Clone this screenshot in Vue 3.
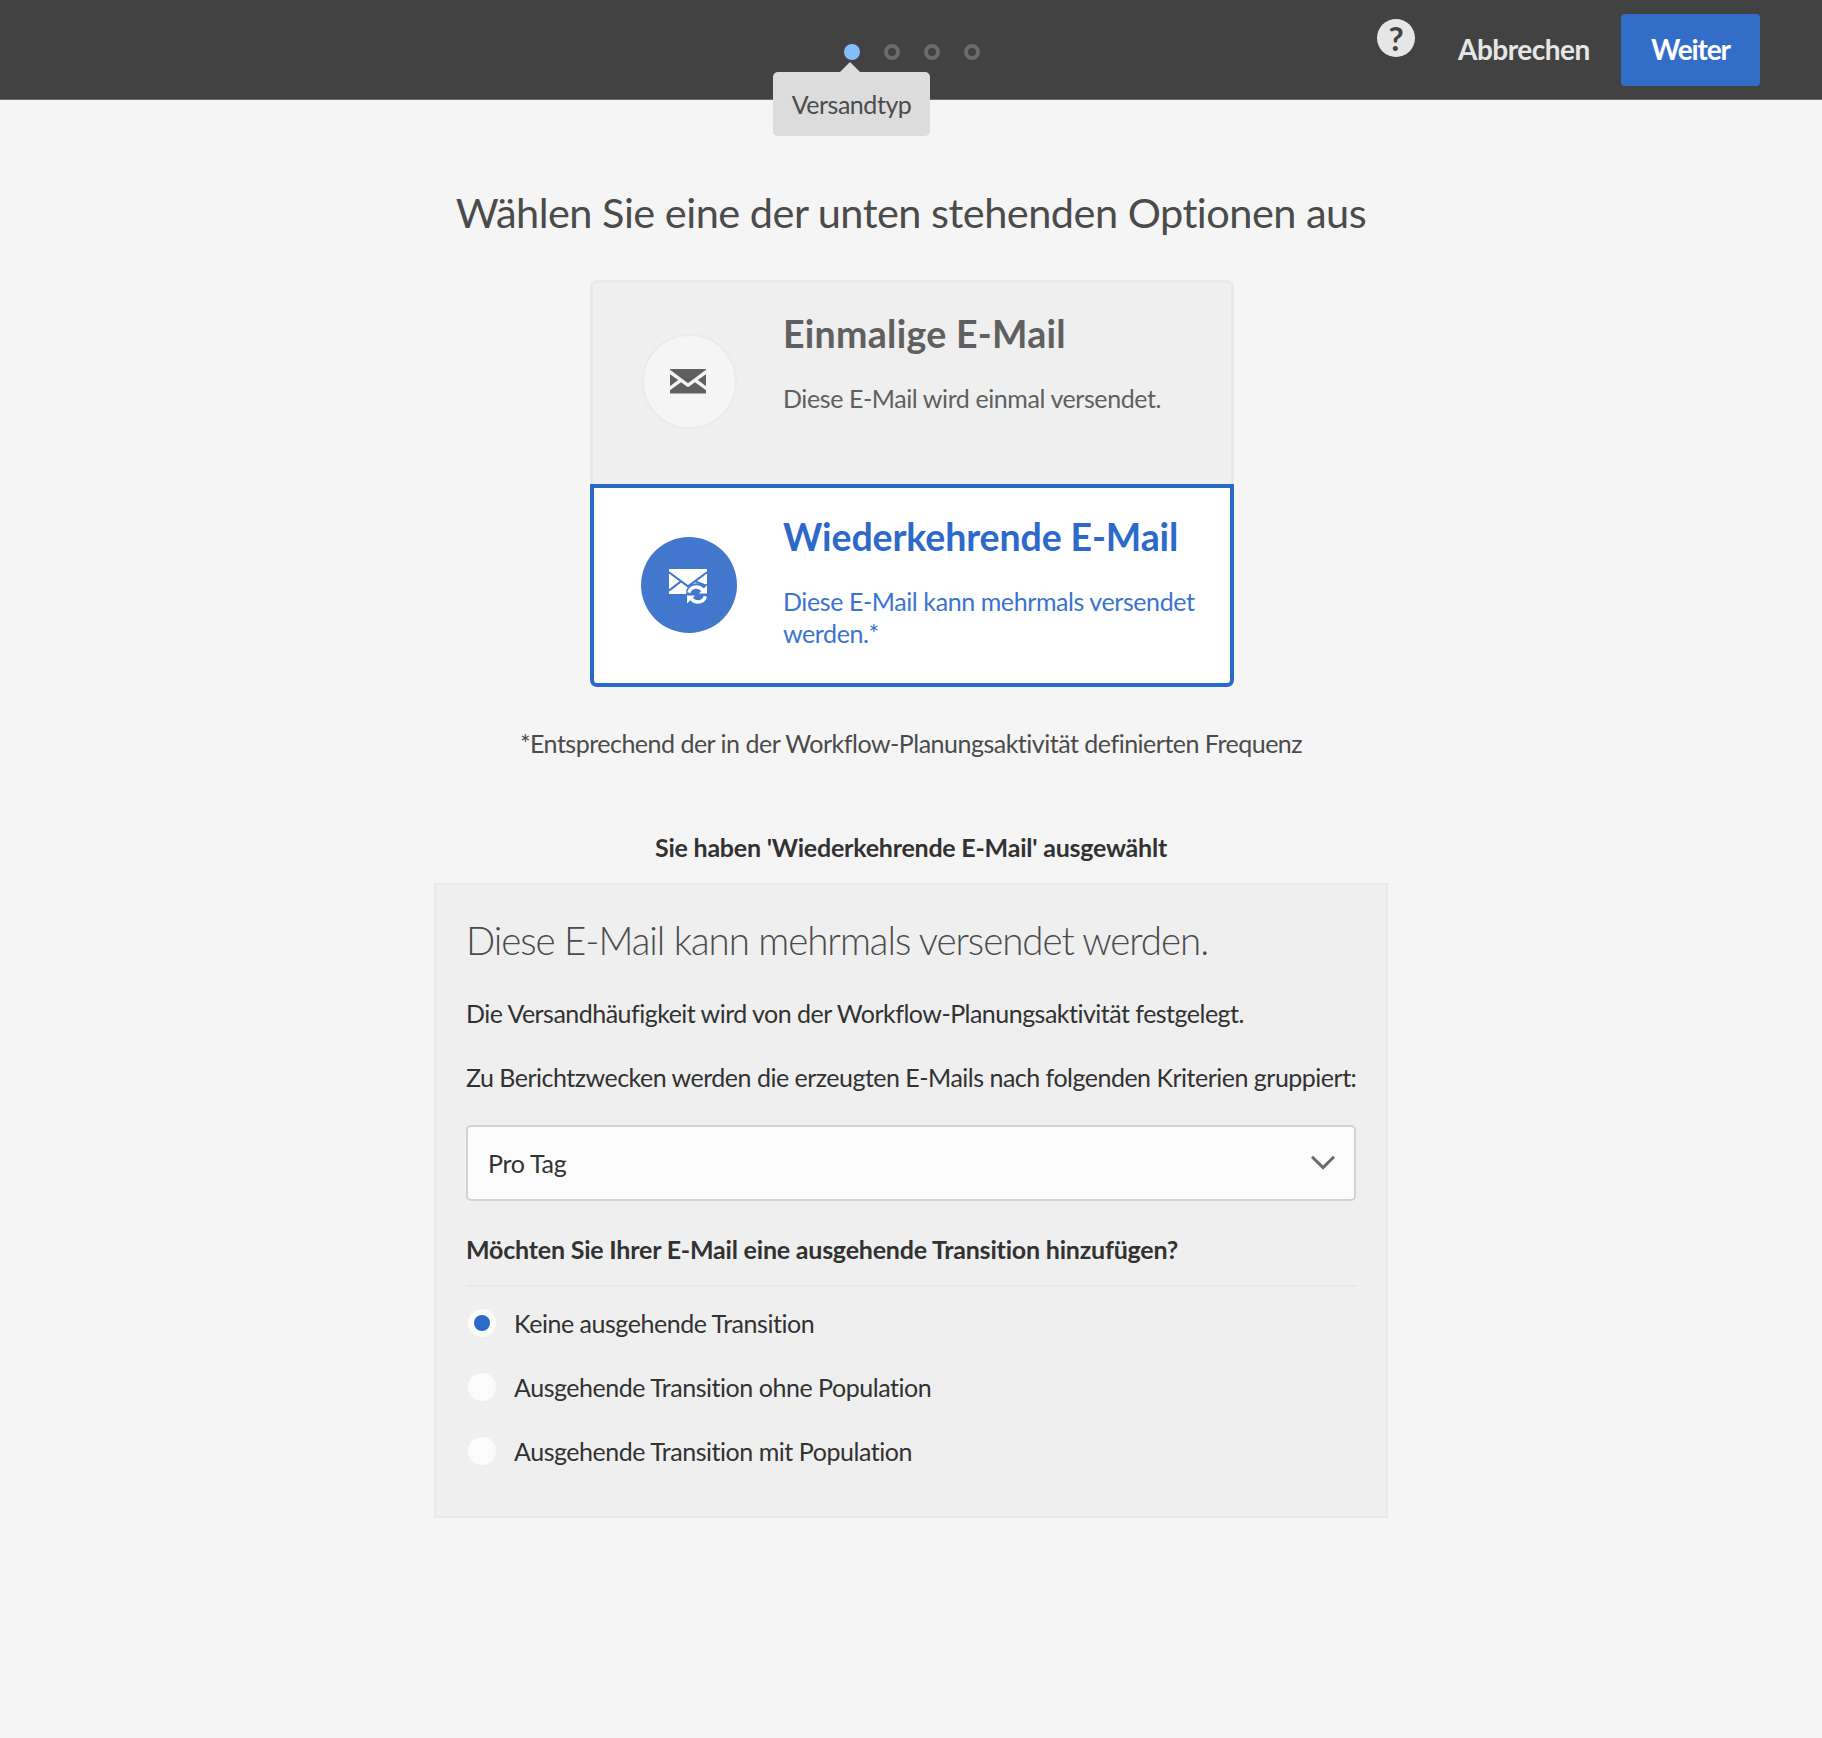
<script setup>
import { ref } from 'vue'

const steps = [{ label: 'Versandtyp' }, {}, {}, {}]
const currentStep = ref(0)

const transitions = [
  { id: 'none', label: 'Keine ausgehende Transition' },
  { id: 'empty', label: 'Ausgehende Transition ohne Population' },
  { id: 'population', label: 'Ausgehende Transition mit Population' },
]
const transition = ref('none')
</script>

<template>
  <div class="page">
    <header class="topbar">
      <ol class="steps">
        <li
          v-for="(step, i) in steps"
          :key="i"
          class="step"
          :class="{ active: i === currentStep }"
        >
          <span v-if="step.label" class="tooltip">{{ step.label }}</span>
        </li>
      </ol>
      <div class="actions">
        <button class="help" type="button" aria-label="Hilfe"><span>?</span></button>
        <button class="cancel" type="button">Abbrechen</button>
        <button class="next" type="button">Weiter</button>
      </div>
    </header>

    <main class="content">
      <h1 class="title">Wählen Sie eine der unten stehenden Optionen aus</h1>

      <div class="cards">
        <section class="card">
          <div class="badge">
            <svg width="36" height="25" viewBox="0 0 36 25" fill="currentColor">
              <path d="M0 0H36V.8L18 14.2 0 .8Z" />
              <path d="M0 5.2L8.2 11 0 17.2ZM36 5.2L27.8 11 36 17.2Z" />
              <path d="M0 24.6V21.2L11 13.2 18 18.2 25 13.2 36 21.2V24.6Z" />
            </svg>
          </div>
          <div class="card-text">
            <h2 class="card-title single">Einmalige E-Mail</h2>
            <p class="card-desc">Diese E-Mail wird einmal versendet.</p>
          </div>
        </section>

        <section class="card selected">
          <div class="badge">
            <svg width="38" height="35" viewBox="0 0 38 35">
              <path d="M0 0H38V25H0Z" fill="#fff" />
              <path
                d="M0 3.2L19 17.4 38 3.2M0 21.6L11.6 12.6M38 17L26.4 12.4"
                fill="none"
                stroke="#4178cd"
                stroke-width="2"
              />
              <path
                d="M17.2 35V21.5C18.6 17 22.8 14.2 27.4 14.2C31 14.2 33.6 15.2 35.2 16.8L38 14.6V35Z"
                fill="#4178cd"
              />
              <g fill="none" stroke="#fff" stroke-width="3.5">
                <path d="M19.8 23.6C20.8 20 23.8 17.9 27.4 17.9C30 17.9 32.4 19.2 34 21.2" />
                <path d="M36.4 27.2C35.4 30.8 32.4 32.9 28.8 32.9C26.2 32.9 23.8 31.6 22.2 29.6" />
              </g>
              <path d="M38 16.2V24.4H29.8ZM18 34.6V26.4H26.2Z" fill="#fff" />
            </svg>
          </div>
          <div class="card-text">
            <h2 class="card-title">Wiederkehrende E-Mail</h2>
            <p class="card-desc">Diese E-Mail kann mehrmals versendet werden.*</p>
          </div>
        </section>
      </div>

      <p class="footnote">
        *Entsprechend der in der Workflow-Planungsaktivität definierten Frequenz
      </p>
      <p class="chosen">Sie haben 'Wiederkehrende E-Mail' ausgewählt</p>

      <section class="panel">
        <h2 class="panel-title">Diese E-Mail kann mehrmals versendet werden.</h2>
        <p class="panel-text frequency">
          Die Versandhäufigkeit wird von der Workflow-Planungsaktivität festgelegt.
        </p>
        <p class="panel-text grouping">
          Zu Berichtzwecken werden die erzeugten E-Mails nach folgenden Kriterien gruppiert:
        </p>

        <div class="select" role="combobox">
          <span>Pro Tag</span>
          <svg width="26" height="16" viewBox="0 0 26 16">
            <path
              d="M2 1.8L13 12.6 24 1.8"
              fill="none"
              stroke="#6a6a6a"
              stroke-width="3"
            />
          </svg>
        </div>

        <h3 class="question">Möchten Sie Ihrer E-Mail eine ausgehende Transition hinzufügen?</h3>
        <div class="options">
          <label
            v-for="option in transitions"
            :key="option.id"
            class="option"
            @click="transition = option.id"
          >
            <span class="radio" :class="{ checked: transition === option.id }"></span>
            <span>{{ option.label }}</span>
          </label>
        </div>
      </section>
    </main>
  </div>
</template>

<style>
body {
  margin: 0;
  background: #f5f5f5;
}
</style>

<style scoped>
.page {
  min-height: 1738px;
  background: #f5f5f5;
  color: #323232;
  font-family: Lato, 'Open Sans', sans-serif;
  font-size: 25px;
  line-height: 32px;
  letter-spacing: -0.46px;
}

.page *,
.page {
  box-sizing: border-box;
}

h1,
h2,
h3,
p,
ol {
  margin: 0;
  padding: 0;
}

button {
  border: 0;
  padding: 0;
  font-family: inherit;
}

.topbar {
  display: grid;
  grid-template-columns: 1fr auto 1fr;
  height: 100px;
  border-bottom: 1px solid #6e6e6e;
  background: #424242;
}

.steps {
  grid-column: 2;
  display: flex;
  gap: 24px;
  height: 16px;
  margin: 44px 0 0 2px;
  list-style: none;
}

.step {
  position: relative;
  width: 16px;
  height: 16px;
  border: 4px solid #6b6b6b;
  border-radius: 50%;
}

.step.active {
  border: 0;
  background: #85bdff;
}

.tooltip {
  position: absolute;
  top: 28px;
  left: -71px;
  width: 157px;
  height: 64px;
  padding-top: 16px;
  border-radius: 5px;
  background: #dcdcdc;
  color: #4b4b4b;
  text-align: center;
}

.tooltip::before {
  content: '';
  position: absolute;
  top: -10px;
  left: 67px;
  border: solid transparent;
  border-width: 0 10px 10px;
  border-bottom-color: #dcdcdc;
}

.actions {
  grid-column: 3;
  display: flex;
  justify-content: flex-end;
  align-items: flex-start;
  padding: 14px 62px 0 0;
}

.help {
  display: flex;
  align-items: center;
  justify-content: center;
  width: 38px;
  height: 38px;
  margin: 5px 43px 0 0;
  border-radius: 50%;
  background: #e6e6e6;
  color: #424242;
  font-size: 33px;
  font-weight: 700;
  line-height: 38px;
}

.cancel {
  width: 133px;
  height: 72px;
  margin-right: 30px;
  background: none;
  color: #e6e6e6;
  font-size: 28px;
  font-weight: 700;
  line-height: 34px;
  letter-spacing: -0.49px;
  text-align: left;
  padding-bottom: 2px;
}

.next {
  width: 139px;
  height: 72px;
  padding-bottom: 2px;
  border-radius: 4px;
  background: #326ec8;
  color: #fff;
  font-size: 28px;
  font-weight: 700;
  line-height: 34px;
  letter-spacing: -1.1px;
}

.content {
  display: flex;
  flex-direction: column;
  align-items: center;
  padding-top: 87px;
}

.title {
  color: #4b4b4b;
  font-size: 41.5px;
  font-weight: 400;
  line-height: 50px;
  letter-spacing: -0.52px;
}

.cards {
  width: 644px;
  margin: 43px 0 40px 2px;
}

.card {
  display: flex;
  height: 204px;
  padding: 28px 20px 0 49px;
  border: 3px solid #e8e8e8;
  border-bottom: 0;
  border-radius: 7px 7px 0 0;
  background: #efefef;
  color: #606060;
}

.card.selected {
  height: 203px;
  padding: 26px 20px 0 47px;
  border: 4px solid #2a69c8;
  border-radius: 0 0 7px 7px;
  background: #fff;
  color: #3b74cf;
}

.badge {
  display: flex;
  align-items: center;
  justify-content: center;
  flex: none;
  width: 95px;
  height: 95px;
  margin: 23px 46px 0 0;
  padding-right: 3px;
  border: 2px solid #eaeaea;
  border-radius: 50%;
  background: #f5f5f5;
}

.selected .badge {
  width: 96px;
  height: 96px;
  border: 0;
  background: #4178cd;
  padding: 3px 2px 0 0;
}

.card-title {
  font-size: 37.5px;
  font-weight: 700;
  line-height: 45px;
  letter-spacing: -0.12px;
}

.selected .card-title {
  color: #2d69c8;
}

.card-title.single {
  letter-spacing: 0.28px;
}

.card-desc {
  margin-top: 26px;
  letter-spacing: -0.41px;
}

.footnote {
  color: #4b4b4b;
  letter-spacing: -0.5px;
}

.chosen {
  margin: 72px 0 20px;
  font-weight: 700;
  letter-spacing: -0.22px;
}

.panel {
  width: 954px;
  height: 635px;
  padding: 32px 29px 0 30px;
  border: 2px solid #e9e9e9;
  background: #efefef;
}

.panel-title {
  color: #4b4b4b;
  font-size: 38.5px;
  font-weight: 300;
  line-height: 46px;
  letter-spacing: -1.05px;
}

.panel-text {
  white-space: nowrap;
}

.frequency {
  margin-top: 34px;
  letter-spacing: -0.52px;
}

.grouping {
  margin: 32px 0;
  letter-spacing: -0.505px;
}

.select {
  display: flex;
  align-items: center;
  justify-content: space-between;
  height: 76px;
  margin-right: 1px;
  padding: 0 18px 0 20px;
  border: 2px solid #d2d2d2;
  border-radius: 5px;
  background: #fbfbfb;
  letter-spacing: -0.3px;
}

.question {
  margin-top: 32px;
  padding-bottom: 20px;
  border-bottom: 2px solid #e8e8e8;
  font-size: 25px;
  font-weight: 700;
  letter-spacing: -0.2px;
}

.options {
  display: flex;
  flex-direction: column;
  gap: 32px;
  padding: 20px 0 0 2px;
}

.option {
  display: flex;
  gap: 18px;
}

.radio {
  display: flex;
  align-items: center;
  justify-content: center;
  width: 28px;
  height: 28px;
  margin-top: 2px;
  border-radius: 50%;
  background: #fbfbfb;
}

.radio.checked::after {
  content: '';
  width: 16px;
  height: 16px;
  border-radius: 50%;
  background: #2d6ac8;
}
</style>
